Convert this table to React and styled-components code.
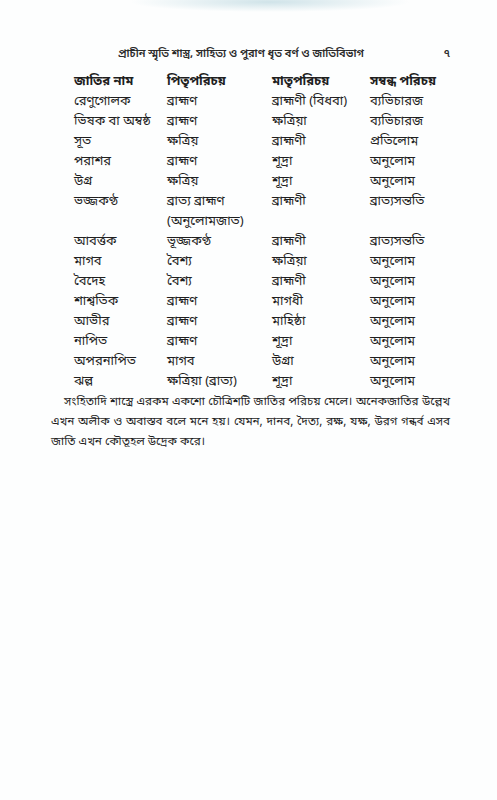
import React from 'react'
import styled, { createGlobalStyle } from 'styled-components'

const GlobalStyle = createGlobalStyle`
html, body {
  margin: 0;
  padding: 0;
  background: #fdfefe;
}
body {
  font-family: "Noto Sans Bengali", "Noto Serif Bengali", "Lohit Bengali", "FreeSerif", "Noto Sans", sans-serif;
  color: #1f1f1f;
}
`;

const Page = styled.div`
width: 497px;
height: 800px;
box-sizing: border-box;
padding: 47px 47px 0 51px;
background:
  radial-gradient(ellipse 140px 10px at 270px 2px, rgba(170, 205, 215, 0.55), transparent),
  #fdfefe;
`;

const RunningHead = styled.div`
display: flex;
justify-content: space-between;
align-items: baseline;
padding-left: 67px;
font-size: 11px;
font-weight: 600;
color: #2a2a2a;
`;

const PageNo = styled.span`
font-size: 11px;
`;

const Table = styled.div`
margin-top: 11px;
padding-left: 23px;
display: grid;
grid-template-columns: 93px 105px 98px 1fr;
`;

const Cell = styled.div`
font-size: 13px;
line-height: 20px;
font-weight: ${p => (p.head ? 700 : 400)};
white-space: nowrap;
`;

const Paragraph = styled.p`
margin: 0;
font-size: 11.7px;
line-height: 20px;
text-indent: 13px;
text-align: justify;
`;

const head = ['জাতির নাম', 'পিতৃপরিচয়', 'মাতৃপরিচয়', 'সম্বন্ধ পরিচয়']

const rows = [
  ['রেণুগোলক', 'ব্রাহ্মণ', 'ব্রাহ্মণী (বিধবা)', 'ব্যভিচারজ'],
  ['ভিষক বা অম্বষ্ঠ', 'ব্রাহ্মণ', 'ক্ষত্রিয়া', 'ব্যভিচারজ'],
  ['সূত', 'ক্ষত্রিয়', 'ব্রাহ্মণী', 'প্রতিলোম'],
  ['পরাশর', 'ব্রাহ্মণ', 'শূদ্রা', 'অনুলোম'],
  ['উগ্র', 'ক্ষত্রিয়', 'শূদ্রা', 'অনুলোম'],
  ['ভজ্জকণ্ঠ', 'ব্রাত্য ব্রাহ্মণ\n(অনুলোমজাত)', 'ব্রাহ্মণী', 'ব্রাত্যসন্ততি'],
  ['আবর্ত্তক', 'ভূজ্জকণ্ঠ', 'ব্রাহ্মণী', 'ব্রাত্যসন্ততি'],
  ['মাগব', 'বৈশ্য', 'ক্ষত্রিয়া', 'অনুলোম'],
  ['বৈদেহ', 'বৈশ্য', 'ব্রাহ্মণী', 'অনুলোম'],
  ['শাশ্বতিক', 'ব্রাহ্মণ', 'মাগধী', 'অনুলোম'],
  ['আভীর', 'ব্রাহ্মণ', 'মাহিষ্ঠা', 'অনুলোম'],
  ['নাপিত', 'ব্রাহ্মণ', 'শূদ্রা', 'অনুলোম'],
  ['অপরনাপিত', 'মাগব', 'উগ্রা', 'অনুলোম'],
  ['ঝল্ল', 'ক্ষত্রিয়া (ব্রাত্য)', 'শূদ্রা', 'অনুলোম'],
]

function App() {
  return (
    <>
      <GlobalStyle />
      <Page>
        <RunningHead>
          <span>প্রাচীন স্মৃতি শাস্ত্র, সাহিত্য ও পুরাণ ধৃত বর্ণ ও জাতিবিভাগ</span>
          <PageNo>৭</PageNo>
        </RunningHead>

        <Table>
          {head.map((h, i) => <Cell head key={'h' + i}>{h}</Cell>)}
          {rows.map((row, r) =>
            row.map((c, i) => (
              <Cell key={r + '-' + i}>
                {c.split('\n').map((line, j) => <div key={j}>{line}</div>)}
              </Cell>
            ))
          )}
        </Table>

        <Paragraph>
          সংহিতাদি শাস্ত্রে এরকম একশো চৌত্রিশটি জাতির পরিচয় মেলে। অনেকজাতির উল্লেখ এখন অলীক ও অবাস্তব বলে মনে হয়। যেমন, দানব, দৈত্য, রক্ষ, যক্ষ, উরগ গন্ধর্ব এসব জাতি এখন কৌতূহল উদ্রেক করে।
        </Paragraph>
      </Page>
    </>
  )
}

export default App
